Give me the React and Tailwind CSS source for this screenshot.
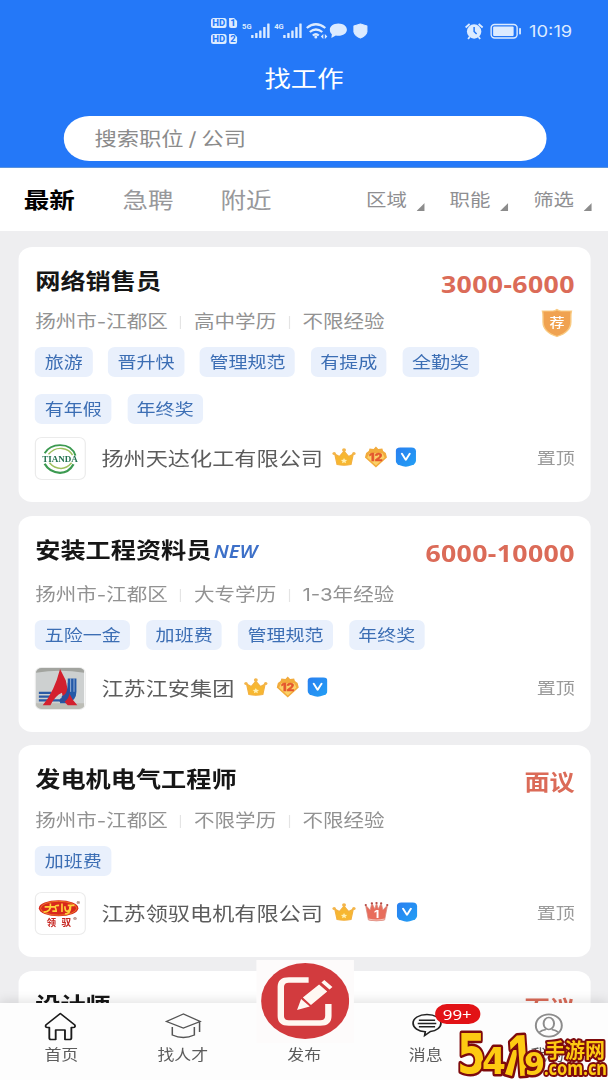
import React from 'react';
import clsx from 'clsx';

const jobs = [
  {
    title: '网络销售员',
    salary: '3000-6000',
    meta: ['扬州市-江都区', '高中学历', '不限经验'],
    recommended: true,
    tags: ['旅游', '晋升快', '管理规范', '有提成', '全勤奖', '有年假', '年终奖'],
    company: '扬州天达化工有限公司',
    logo: 'tianda',
    level: 'gem',
    metaClass: 'mt-[13px]',
    tagsClass: 'mt-[13px] mb-[13px]',
  },
  {
    title: '安装工程资料员',
    isNew: true,
    salary: '6000-10000',
    meta: ['扬州市-江都区', '大专学历', '1-3年经验'],
    tags: ['五险一金', '加班费', '管理规范', '年终奖'],
    company: '江苏江安集团',
    logo: 'jiangan',
    level: 'gem',
    metaClass: 'mt-[17px]',
    tagsClass: 'mt-[13px] mb-[17px]',
  },
  {
    title: '发电机电气工程师',
    salary: '面议',
    meta: ['扬州市-江都区', '不限学历', '不限经验'],
    tags: ['加班费'],
    company: '江苏领驭电机有限公司',
    logo: 'lingyu',
    level: 'crown',
    cardClass: '-mt-px',
    metaClass: 'mt-[14px]',
    tagsClass: 'mt-[13px] mb-4',
  },
  { title: '设计师', salary: '面议' },
];

const StatusBar = () => (
  <div className="h-[60px] flex text-[#dcebff]">
    <svg className="w-[140px] h-[32px] ml-[181px] mt-[15px]" viewBox="0 0 162 32" preserveAspectRatio="none" fill="currentColor">
      {/* HD 1 / HD 2 */}
      {[0, 16].map((y, i) => (
        <g key={y} fontFamily="Roboto, sans-serif" fontWeight="800" fontSize="9.5">
          <rect x="1" y={y + 3} width="15.5" height="10" rx="2.5" />
          <path d={`M19 ${y + 3}h5l3 3v5q0 2-2 2h-4q-2 0-2-2z`} />
          <text x="2.2" y={y + 11.4} fill="#2478f8" textLength="13">HD</text>
          <text x="20.2" y={y + 11.4} fill="#2478f8">{i + 1}</text>
        </g>
      ))}
      {/* mobile signal */}
      {[{ x: 32, t: '5G' }, { x: 64, t: '4G' }].map(({ x, t }) => (
        <g key={t}>
          <text x={x} y="14.5" fontFamily="Roboto, sans-serif" fontWeight="700" fontSize="8" textLength="9.5" lengthAdjust="spacingAndGlyphs">{t}</text>
          <rect x={x + 9} y="20" width="2.4" height="3" rx=".5" />
          <rect x={x + 13} y="18" width="2.4" height="5" rx=".5" />
          <rect x={x + 17} y="15.5" width="2.4" height="7.5" rx=".5" />
          <rect x={x + 21} y="12" width="2.4" height="11" rx=".5" />
          <rect x={x + 25} y="8.5" width="2.4" height="14.5" rx=".5" />
        </g>
      ))}
      {/* wifi */}
      <g fill="none" stroke="currentColor" strokeWidth="2.2">
        <path d="M96.5 13q9-7.500 18.500 0" />
        <path d="M99.5 17q6-5 12.500 0" />
        <path d="M102.5 20.5q3-2.500 6 0" />
      </g>
      <circle cx="105.5" cy="22" r="1.5" />
      <path d="M113 19l-2.500 2.500 2.500 2.500zM114.5 19l2.500 2.500-2.500 2.500z" />
      <path d="M128 8.500c5 0 8.500 2.800 8.500 6.200s-3.500 6-8.500 6q-1.500 0-2.500-.2l-4.500 2.500.5-3.800c-1.400-1.200-2-2.800-2-4.500 0-3.400 3.500-6.200 8.500-6.200z" />
      <path d="M150 9l6.500 2v6q-1 4-6.500 6-5.500-2-6.500-6v-6z" stroke="currentColor" strokeLinejoin="round" />
    </svg>
    <svg className="w-[50px] h-[24px] ml-[79px] mt-[19px]" viewBox="0 0 58 24" preserveAspectRatio="none">
      {/* alarm and battery */}
      <circle cx="10" cy="12.500" r="7.200" fill="currentColor" />
      <path d="M1.500 8.500L5.500 5M18.500 8.500L14.500 5M5.500 18L4 20M14.500 18l1.500 2" stroke="currentColor" strokeWidth="1.800" />
      <path d="M10 8v4.500l2.500 2.500" stroke="#2478f8" strokeWidth="1.500" fill="none" />
      <rect x="27" y="5.500" width="26" height="13.500" rx="3.500" fill="none" stroke="currentColor" strokeWidth="1.400" />
      <rect x="29" y="7.500" width="20.500" height="9.500" rx="1" fill="currentColor" />
      <rect x="55" y="9" width="1.800" height="6.500" rx=".8" fill="currentColor" />
    </svg>
    <span className="ml-[6px] mt-[21px] text-[15.8px] leading-[22px] font-['Inter','Noto_Sans',sans-serif]">10:19</span>
  </div>
);

const Header = () => (
  <header className="h-[168px] bg-[#2478f8] text-white border-b border-[#5b93dc]">
    <StatusBar />
    <h1 className="pt-px text-center text-[22.7px] leading-[36px]">找工作</h1>
    <div className="mt-[19px] ml-[54.5px] w-[416px] h-[45px] rounded-[22px] bg-white flex items-center pl-[27px] pt-px text-[19.2px] text-[#8b8b8b] [word-spacing:-1.2px]">
      搜索职位 / 公司
    </div>
  </header>
);

const Filter = ({ label }) => (
  <div className="flex w-[72px] shrink-0 text-[17.6px] text-[#8f8f92]">
    {label}
    <svg className="w-[7px] h-2 ml-[8px] mt-[16px]" viewBox="0 0 8 8" preserveAspectRatio="none">
      <path d="M8 0v8H0z" fill="#8c8c8c" />
    </svg>
  </div>
);

const Tabs = () => (
  <div className="h-[63px] pt-[2px] bg-white flex items-center text-[22px] text-[#98989b]">
    <span className="w-[85px] shrink-0 ml-[20.5px] font-bold text-black">最新</span>
    <span className="w-[84.5px] shrink-0">急聘</span>
    <span className="w-[125.5px] shrink-0">附近</span>
    <Filter label="区域" />
    <Filter label="职能" />
    <Filter label="筛选" />
  </div>
);

const RecommendBadge = () => (
  <svg className="w-7 h-[30px] ml-auto mr-px mt-px" viewBox="0 0 28 30">
    <path d="M14 1.500q1.500 1.500 3.500 1.500h9q-.5 2-.5 6v5q0 10-12 14.500Q2 24 2 14V9q0-4-.5-6h9q2 0 3.500-1.500z" fill="#f0a250" stroke="#f9cb83" strokeWidth="1.200" />
    <text x="14" y="19.500" textAnchor="middle" fontSize="13" fontWeight="500" fill="#fff">荐</text>
  </svg>
);

const Crown = () => (
  <svg className="w-[21px] h-[20px]" viewBox="0 0 21 20">
    <path d="M2.500 7L6.500 9.500 10.500 4l4 5.500 4-2.500-2 10.500q-6 1.500-12 0z" fill="#f7b731" stroke="#f3b040" />
    <circle cx="2" cy="6.500" r="1.500" fill="#f3b54b" />
    <circle cx="10.500" cy="3" r="1.700" fill="#f3b54b" />
    <circle cx="19" cy="6.500" r="1.500" fill="#f3b54b" />
    <path d="M10.500 11l.8 1.800 2 .2-1.500 1.300.4 2-1.700-1-1.700 1 .4-2-1.500-1.300 2-.2z" fill="#fff0b5" />
  </svg>
);

const Gem = () => (
  <svg className="w-[20px] h-[22px]" viewBox="0 0 20 22">
    <path d="M10 .5l2 2.500 3.500-.5.7 2.500L18.500 7l1 4.500L10 21.500.5 11.500l1-4.500 2.300-2 .7-2.500L8 3z" fill="#f2ab3c" />
    <path d="M4.500 7h11l2 4.500L10 19.500 2.500 11.500z" fill="#fbd168" />
    <text x="10" y="15.500" textAnchor="middle" fontSize="10.500" fontWeight="800" fill="#e4572e" stroke="#e4572e" strokeWidth=".5">12</text>
  </svg>
);

const RedCrown = () => (
  <svg className="w-[21px] h-[21px]" viewBox="0 0 21 21">
    <path d="M1 4l4 5 1.500-7L9 8 10.500 2 12 8l2.500-6L16 9l4-5-2.500 15q-7 1.800-14 0z" fill="#e86d5c" stroke="#d98b80" strokeWidth=".7" />
    <g fill="#b34a45">
      <circle cx="1.200" cy="4" r="1" />
      <circle cx="6.500" cy="2.300" r="1" />
      <circle cx="10.500" cy="2" r="1" />
      <circle cx="14.500" cy="2.300" r="1" />
      <circle cx="19.800" cy="4" r="1" />
    </g>
    <path d="M3.500 18q7 1.800 14 0" stroke="#f7c2b8" fill="none" />
    <text x="10.500" y="17" textAnchor="middle" fontSize="10.500" fontWeight="700" fill="#fff">1</text>
  </svg>
);

const Verified = () => (
  <svg className="w-[17.5px] h-5" viewBox="0 0 18 21" preserveAspectRatio="none">
    <defs>
      <linearGradient id="verified" x1="0" y1="0" x2="1" y2="1">
        <stop offset="0" stopColor="#2a7ff0" />
        <stop offset="1" stopColor="#22a0f5" />
      </linearGradient>
    </defs>
    <path d="M4 .5h10q4 0 4 4V14q0 3.500-3 5-4 1.800-6 1.800T3 19Q0 17.500 0 14V4.500q0-4 4-4z" fill="url(#verified)" />
    <path d="M5.500 7L9 13.500 12.500 7" stroke="#fff" strokeWidth="1.800" fill="none" strokeLinecap="round" strokeLinejoin="round" />
  </svg>
);

const TiandaLogo = () => (
  <svg className="w-full h-full" viewBox="0 0 50 43" preserveAspectRatio="none">
    <g fill="none">
      <path d="M9 16Q14 7.500 25 7.500q12.500 0 16 11" stroke="#3c9a51" strokeWidth="2" />
      <path d="M13 17q6-7 14-6 8 1 11 7" stroke="#9dbf5c" strokeWidth="1.500" />
      <path d="M9 27q5 9 16 9.500 9 0 14-9" stroke="#3c9a51" strokeWidth="2.400" />
      <path d="M14 26q5 6 12 6 6 0 11-6" stroke="#9dbf5c" strokeWidth="1.500" />
    </g>
    <text x="6.500" y="25" fontFamily="'Liberation Serif', serif" fontWeight="700" fontSize="8.500" textLength="37" lengthAdjust="spacingAndGlyphs" fill="#22714f">TIANDA</text>
  </svg>
);

const JianganLogo = () => (
  <svg className="w-full h-full" viewBox="0 0 50 43" preserveAspectRatio="none">
    <rect width="50" height="43" fill="#cdd0d0" />
    <path d="M0 5q25-4 50 0V0H0z" fill="#a2a49f" />
    <path d="M0 37h50v6H0z" fill="#bcbdb6" />
    <path d="M3 26h13M3 30h13M3 34h28" stroke="#2a5aa5" strokeWidth="2.400" />
    <path d="M33 11h9v14q0 9-9 12h-8v-5q8 0 8-7z" fill="#2459a8" />
    <path d="M36 11v14M39.500 11v14" stroke="#b9cbe2" strokeWidth=".8" />
    <path d="M25 1l6 12q2 16 12 26H33q-5-4-6-13-7 3-12 13H7Q19 25 25 1z" fill="#d3202e" />
    <path d="M27 29q6 0 6-14l2 9q0 9-7 12-2 0-4-1 3-3 3-6z" fill="#2c4f9c" />
  </svg>
);

const LingyuLogo = () => (
  <svg className="w-full h-full" viewBox="0 0 50 43" preserveAspectRatio="none">
    <ellipse cx="23.500" cy="16" rx="20.500" ry="8.500" fill="#d9271c" />
    <ellipse cx="23.500" cy="16" rx="18.800" ry="7.300" fill="none" stroke="#f08c28" strokeWidth=".8" />
    <path d="M9 14.500h11M15 11q1 9-7 9M24 13q-5 0-4 2t1 4h-4M27 11v9M30 14q0 6 3 5t2-5M36 14q0 8-6 8M33 13h7" stroke="#ffd23c" strokeWidth="1.700" fill="none" />
    <text x="44" y="12.500" textAnchor="middle" fontSize="5.500" fill="#7c3a2a">®</text>
    <text x="11" y="35" fontSize="10" fontWeight="700" fill="#c62520" letterSpacing="5.500">领驭</text>
    <text x="40.500" y="29" textAnchor="middle" fontSize="5.500" fill="#7c3a2a">®</text>
  </svg>
);

const logos = { tianda: TiandaLogo, jiangan: JianganLogo, lingyu: LingyuLogo };

const JobDetails = ({ job }) => {
  const Logo = logos[job.logo];

  return (
    <>
      <div className={clsx('flex h-6 items-center text-[17.7px] text-[#929292]', job.metaClass)}>
        {job.meta.map((item, i) => (
          <React.Fragment key={item}>
            {i > 0 && <span className="w-px h-[13px] mx-[10.800px] bg-[#e4e4e4]" />}
            <span>{item}</span>
          </React.Fragment>
        ))}
        {job.recommended && <RecommendBadge />}
      </div>

      <div className={clsx('flex flex-wrap max-w-[440px] gap-x-[13.6px] gap-y-[17px]', job.tagsClass)}>
        {job.tags.map((tag) => (
          <span key={tag} className="h-[30px] px-[8.2px] rounded-md bg-[#e9f0fc] text-[16.4px] leading-[31px] text-[#3c6eb4]">{tag}</span>
        ))}
      </div>

      <div className="flex h-[43px] items-center">
        <div className="w-[43.5px] h-[43px] rounded-md overflow-hidden border border-[#ebebeb]">
          <Logo />
        </div>
        <span className="ml-[13.5px] mt-px text-[19.1px] text-[#5c5c5c]">{job.company}</span>
        <div className="flex items-center gap-[7px] ml-2 -mt-1">
          <Crown />
          {job.level === 'gem' ? <Gem /> : <RedCrown />}
          <Verified />
        </div>
        <span className="ml-auto text-[16.4px] text-[#9a9a9a]">置顶</span>
      </div>
    </>
  );
};

const JobCard = ({ job }) => (
  <article className={clsx('w-[492.5px] rounded-xl bg-white pl-[14px] pr-[13.5px] pt-[19px] pb-[22px] shrink-0', job.cardClass)}>
    <div className="flex h-[31px] items-center">
      <h2 className="-mt-px text-[21.7px] font-bold text-[#161616]">{job.title}</h2>
      {job.isNew && (
        <span className="ml-[2px] mt-[2px] text-[17.5px] font-semibold italic text-[#3d70c8] font-['Noto_Sans',sans-serif]">NEW</span>
      )}
      <span className={clsx(
        "ml-auto mt-[5px] font-bold text-[#db6b58] font-['Noto_Sans','Noto_Sans_CJK_SC',sans-serif]",
        job.salary === '面议' ? 'text-[21.7px]' : 'text-[23px] tracking-[0.3px]',
      )}>
        {job.salary}
      </span>
    </div>
    {job.meta && <JobDetails job={job} />}
  </article>
);

const HomeIcon = () => (
  <svg className="w-[28px] h-[29px] -mt-[2px] -ml-px" viewBox="0 0 28 29" fill="none" stroke="#1c1c1c" strokeWidth="1.600" strokeLinejoin="round">
    <path d="M14 1.500L26.500 13q.8 2.500-1.500 2.500h-1.500V26q0 1.500-1.500 1.500h-4V18h-8v9.500H6Q4.500 27.500 4.500 26V15.500H3Q.7 15.500 1.500 13z" />
  </svg>
);

const TalentIcon = () => (
  <svg className="w-[32px] h-[29px] -mt-px" viewBox="0 0 32 29" fill="none" stroke="#555" strokeWidth="1.300">
    <path d="M16 2L1.500 9.500 16 16l14.500-6.500zM6.500 15v8q9.500 5 19 0v-8M30 10v10" />
  </svg>
);

const MessageIcon = () => (
  <svg className="w-[26px] h-[25px] ml-[2px] -mt-[3px]" viewBox="0 0 26 25" fill="none" stroke="#222" strokeWidth="1.500">
    <path d="M13 1.500c7 0 12 3.800 12 8.700 0 4.500-4 7.700-9 8.300l-5 4 .5-3.800C5.500 18.200 1 15 1 10.200c0-4.900 5-8.700 12-8.700z" />
    <path d="M6 7.200h14M5 10.500h16M6 13.800h14" />
  </svg>
);

const ProfileIcon = () => (
  <svg className="w-[26px] h-[25px] ml-[2px] -mt-[3px]" viewBox="0 0 26 25" fill="none" stroke="#8c8c8c" strokeWidth="1.700">
    <circle cx="13" cy="12.500" r="11.200" />
    <ellipse cx="13" cy="10.500" rx="4.500" ry="6" />
    <path d="M4.500 19.500q2.500-2.500 6-3M21.500 19.500q-2.500-2.500-6-3" />
  </svg>
);

const PostIcon = () => (
  <svg className="w-[76px] h-[76px]" viewBox="0 0 76 76">
    <circle cx="38" cy="38" r="38" fill="#d23b3e" />
    <path d="M41 17H24q-7 0-7 7v29q0 7 7 7h27q7 0 7-7V41" stroke="#fff8f2" strokeWidth="5.500" fill="none" />
    <path d="M31 47l3.500-11 7.500 7.500zM36 34.500l14-13 7 7-14 13.500zM52 19.500l2.500-2.500 7 7-2.500 2.500z" fill="#fff8f2" />
  </svg>
);

const NavItem = ({ icon, label, badge }) => (
  <div className="relative flex-1 flex flex-col items-center pt-[9px]">
    <div className="h-[30px] flex items-center">{icon}</div>
    <span className="mt-[2px] text-[14.6px] leading-[22px] text-[#5c5c5c]">{label}</span>
    {badge && (
      <span className="absolute left-[60px] top-px h-5 w-[39px] rounded-full bg-[#e21216] text-center text-[14.5px] leading-[21px] text-white font-['Noto_Sans',sans-serif]">{badge}</span>
    )}
  </div>
);

const BottomNav = () => (
  <nav className="absolute bottom-0 left-0 w-full h-[77px] bg-[#fdfdfd] flex pl-[0.5px] shadow-[0_-2px_10px_rgba(0,0,0,0.12)]">
    <NavItem icon={<HomeIcon />} label="首页" />
    <NavItem icon={<TalentIcon />} label="找人才" />
    <div className="flex-1 flex flex-col items-center">
      <div className="w-[84px] h-[83px] -mt-[43px] ml-[2px] pt-[3px] flex justify-center bg-[#fdfbfb] shrink-0">
        <PostIcon />
      </div>
      <span className="mt-px text-[14.6px] leading-[22px] text-[#5c5c5c]">发布</span>
    </div>
    <NavItem icon={<MessageIcon />} label="消息" badge="99+" />
    <NavItem icon={<ProfileIcon />} label="我的" />
  </nav>
);

const SiteMark = () => (
  <svg className="absolute right-0 bottom-0 w-[152px] h-[56px]" viewBox="0 0 152 56" fill="#fdca12" stroke="#7d0a0c" strokeWidth="5" strokeLinejoin="round" fontWeight="700">
    <g fontFamily="'DejaVu Sans', sans-serif" style={{ paintOrder: 'stroke' }}>
      <text x="1" y="49" fontSize="56" textLength="29" lengthAdjust="spacingAndGlyphs">5</text>
      <text x="26" y="50" fontSize="38" textLength="24" lengthAdjust="spacingAndGlyphs">4</text>
      <path d="M49 50l8-24h5l-6 26z" />
      <text x="54" y="52" fontSize="56" fontFamily="Inter, sans-serif" textLength="20" lengthAdjust="spacingAndGlyphs" transform="rotate(-4 64 50)">1</text>
      <text x="68" y="51" fontSize="32" textLength="21" lengthAdjust="spacingAndGlyphs">9</text>
    </g>
    <g fontFamily="'Noto Sans CJK SC', sans-serif" strokeWidth="4" style={{ paintOrder: 'stroke' }}>
      <text x="89" y="34" fontSize="20" textLength="60" lengthAdjust="spacingAndGlyphs">手游网</text>
      <text x="88" y="51" fontSize="19" fontFamily="'Noto Sans', sans-serif" textLength="63" lengthAdjust="spacingAndGlyphs">.com.cn</text>
    </g>
  </svg>
);

const App = () => {
  return (
    <div className="relative w-[608px] h-[1080px] overflow-hidden bg-[#eeeef0] font-['Inter','Noto_Sans_CJK_SC',sans-serif]">
      <div className="relative w-[524px] h-[1080px] overflow-hidden origin-top-left scale-x-[1.1603]">
        <Header />
        <Tabs />
        <main className="flex flex-col items-start gap-[14px] pl-[16.4px] pt-4">
          {jobs.map((job) => (
            <JobCard key={job.title} job={job} />
          ))}
        </main>
        <BottomNav />
      </div>
      <SiteMark />
    </div>
  );
};

export default App;
